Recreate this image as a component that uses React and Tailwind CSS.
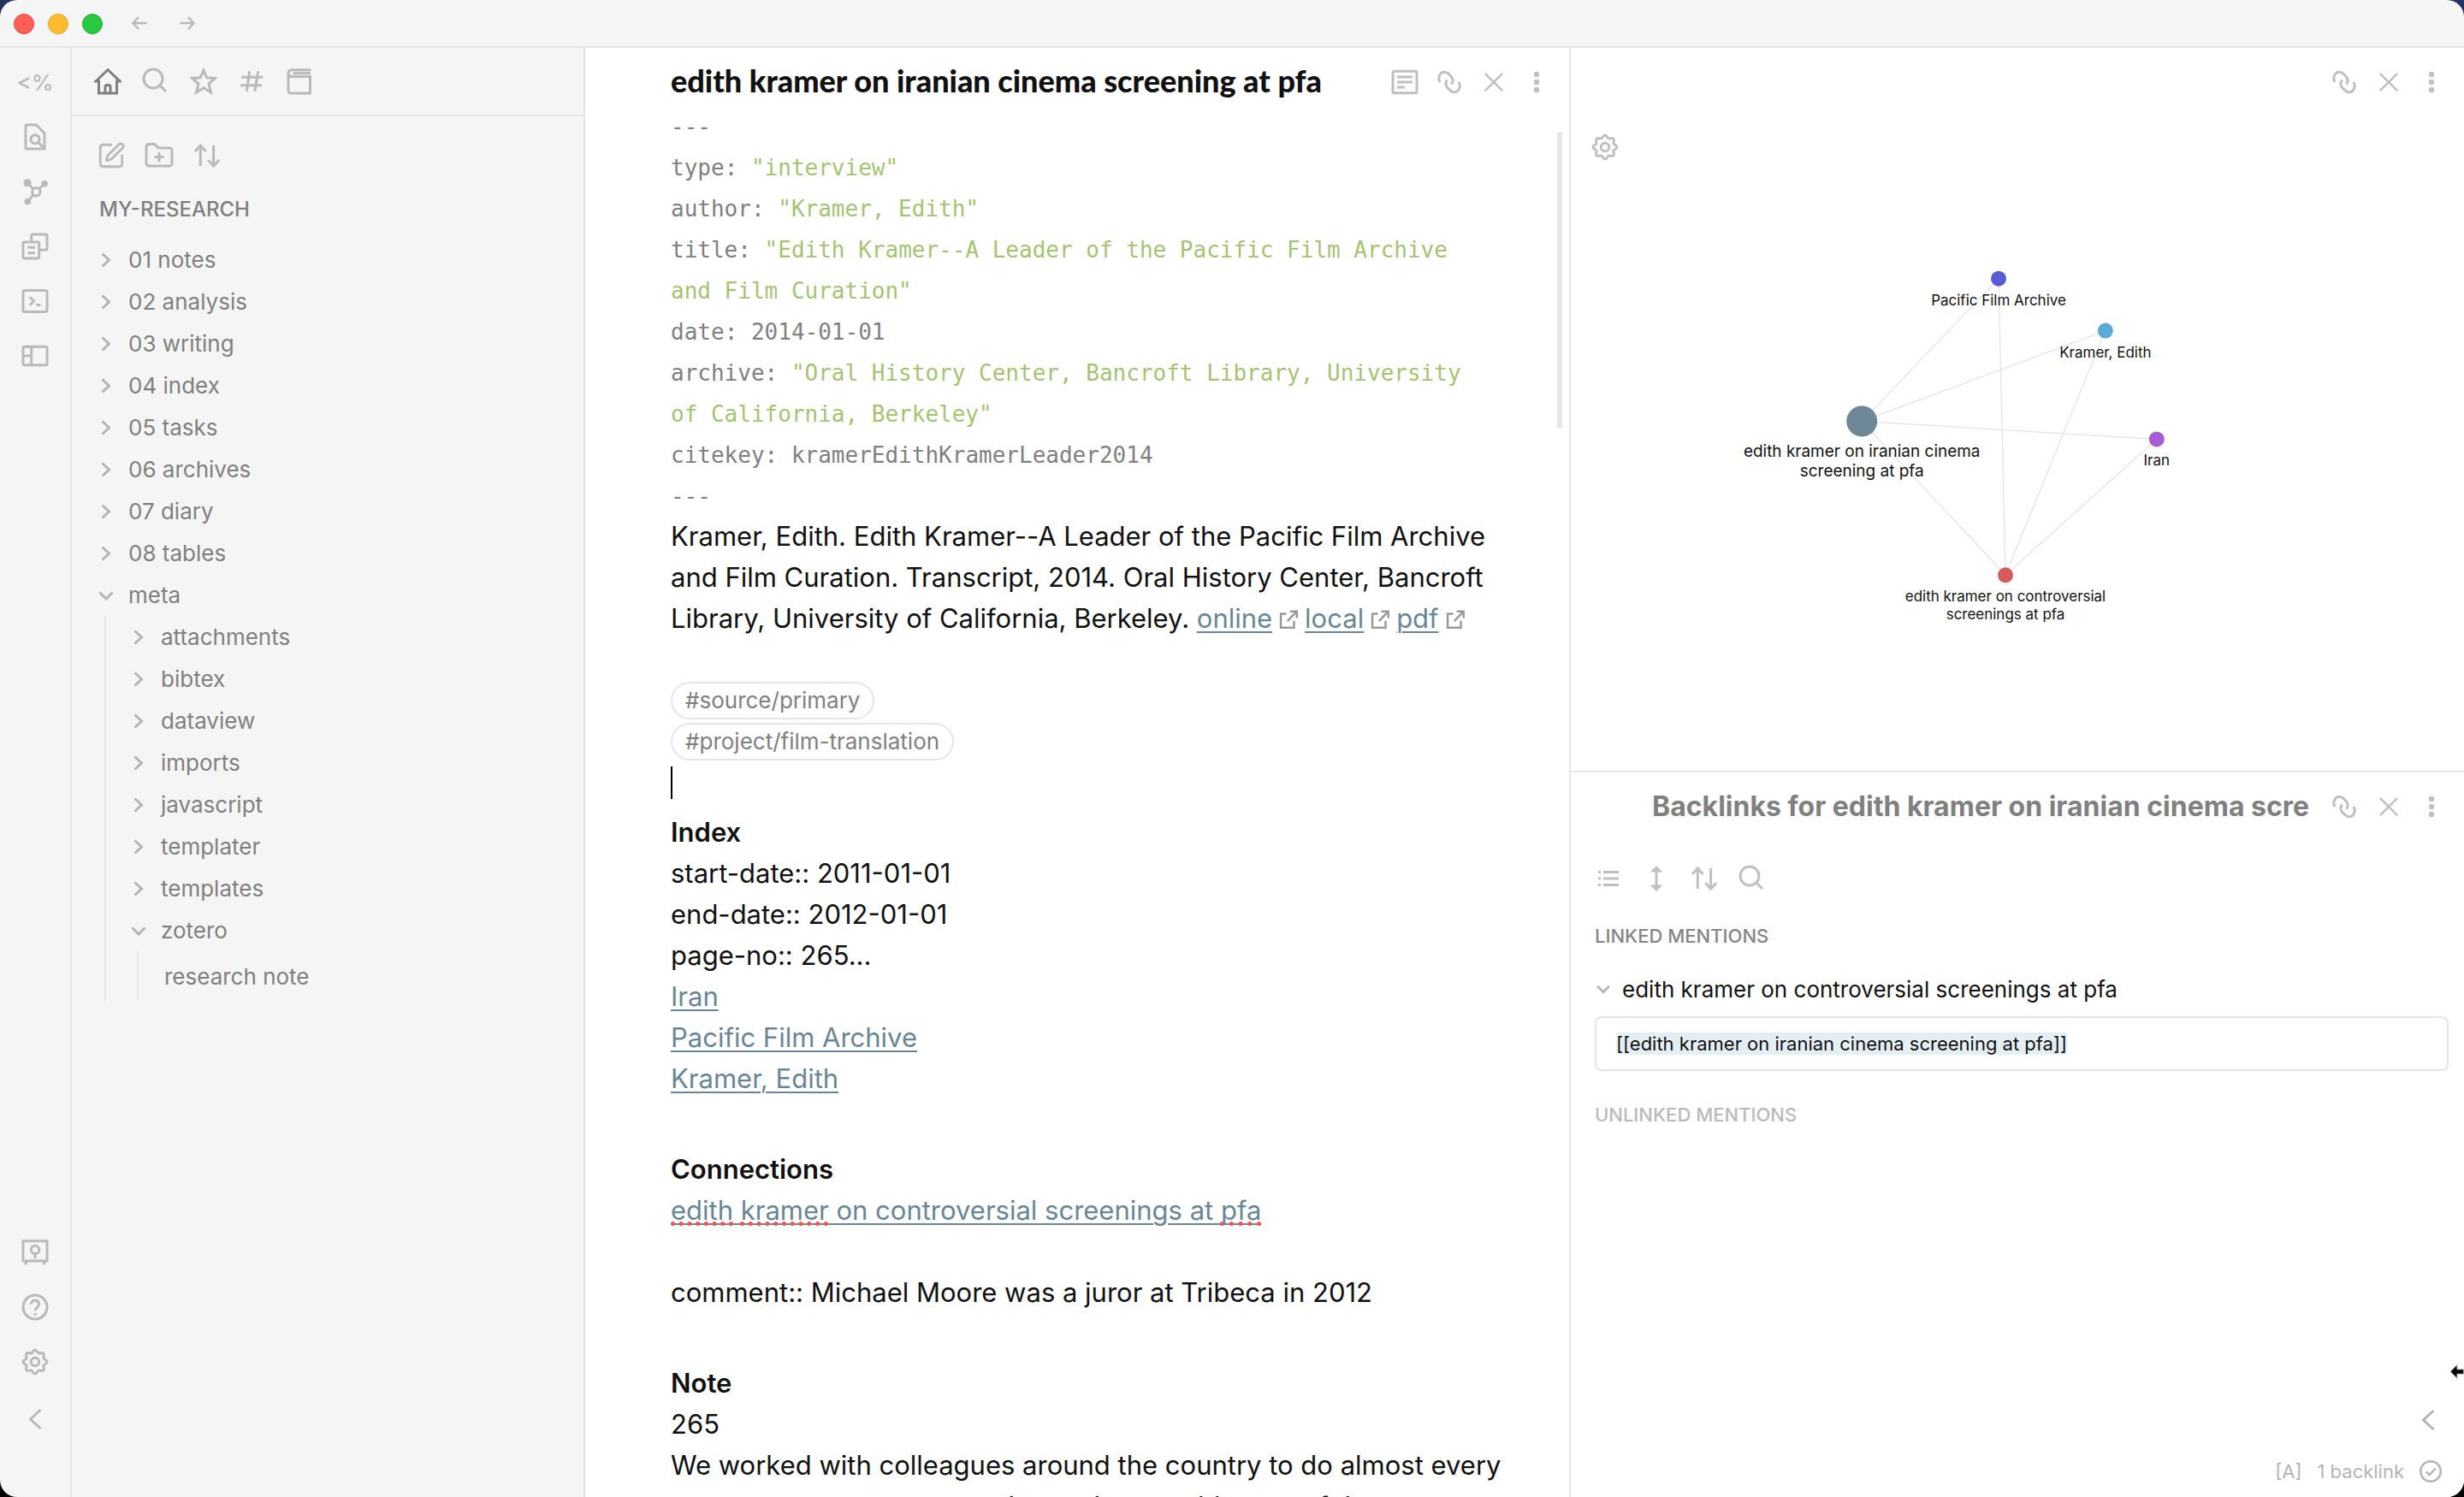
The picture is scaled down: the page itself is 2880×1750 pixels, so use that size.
import React from "react";
import { FolderPlus, SquarePen } from "lucide-react";

const gearPath =
  Array.from({ length: 96 }, (_, i) => {
    const t = (i / 96) * Math.PI * 2;
    const r = 12.4 + 1.5 * Math.cos(8 * t);
    return `${i ? "L" : "M"}${(16 + r * Math.sin(t)).toFixed(2)} ${(16 - r * Math.cos(t)).toFixed(2)}`;
  }).join("") + "Z";

const shapes = {
  home: (
    <>
      <path d="M2 16 16 2.5 30 16H26.5V30H5.5V16Z" />
      <path d="M13 30v-7.5a2 2 0 0 1 2-2h2a2 2 0 0 1 2 2V30" />
    </>
  ),
  search: (
    <>
      <circle cx="13" cy="13" r="11" />
      <path d="m21 21 7 7" />
    </>
  ),
  star: <path d="M16 3 19.8 11.8 29.5 12.4 22 18.8 24.5 29 16 23.8 7.5 29 10 18.8 2.5 12.4 12.2 11.8Z" />,
  hash: <path d="M13.7 4.3 10.3 27.7M23.7 4.3 19.9 27.7M4.3 11.3H29.3M3 20.7H28" />,
  book: (
    <>
      <path d="M29.5 2.7H7a4 4 0 0 0-4 4V27a3 3 0 0 0 3 3h22.5V10.5H7a4 4 0 0 1-4-4" />
      <path d="M8.5 6.7H29" />
    </>
  ),
  sort: <path d="M8.3 28V4M2 11 8.3 4l6.3 7M23.6 4v24M17.3 21.3l6.3 6.7 6.4-6.7" />,
  fileSearch: (
    <>
      <path d="M6.5 2H17.3L27 11.7V30H6.5A1.5 1.5 0 0 1 5 28.5V3.5A1.5 1.5 0 0 1 6.5 2Z" />
      <circle cx="16" cy="18.7" r="5" />
      <path d="m19.6 22.3 7.4 7.2" />
    </>
  ),
  graph: (
    <>
      <circle cx="17.3" cy="16.3" r="4.7" />
      <path d="M7 5.7 13.9 13M20.6 13 27 6.7M14 19.8 7.3 27.7" />
      <g fill="currentColor" stroke="none">
        <circle cx="7" cy="5.7" r="4.5" />
        <circle cx="27" cy="6.7" r="3.8" />
        <circle cx="7.3" cy="27.5" r="3.8" />
      </g>
    </>
  ),
  copy: (
    <>
      <path d="M11.7 11V3.5A1.5 1.5 0 0 1 13.2 2H28.5A1.5 1.5 0 0 1 30 3.5V18.8A1.5 1.5 0 0 1 28.5 20.3H21" />
      <rect x="2" y="11" width="18.7" height="19" rx="1.5" />
      <path d="M7.3 17.3H16M7.3 23.7H16" />
    </>
  ),
  terminal: (
    <>
      <rect x="2" y="3.5" width="28" height="25" rx="2" />
      <path d="m9.7 11.3 4.8 4.7-4.8 4.7M17.5 20.5h5" />
    </>
  ),
  layout: (
    <>
      <rect x="2" y="5.3" width="28" height="21.5" rx="1.5" />
      <path d="M11.7 5.3V26.8M2 16H11.7" />
    </>
  ),
  vault: (
    <>
      <path d="M2 2.7H30V26H2ZM5.3 26v4.5M26.7 26v4.5M16 17.7v5.5" />
      <circle cx="16" cy="13" r="4.7" />
    </>
  ),
  help: (
    <>
      <circle cx="16" cy="16" r="14" />
      <path d="M11.5 12.5a4.5 4.5 0 1 1 7.3 3.5C17 17.3 16 18 16 20.3M16 23v2.5" />
    </>
  ),
  gear: (
    <>
      <path d={gearPath} />
      <circle cx="16" cy="16" r="4.7" />
    </>
  ),
  back: <path d="M22.5 5 10.5 16 22.5 27" />,
  lines: (
    <>
      <rect x="2" y="3.3" width="28" height="25.4" rx="1.5" />
      <path d="M7 10H25M7 16H25M7 22H16" />
    </>
  ),
  link: (
    <>
      <path d="M5 16C2 11 5 4.2 10.5 4.2C13.5 4.2 15 6 18 9.2C21.2 13 20.5 16 18.5 18.5" />
      <path d="M27 16C30 21 27 27.8 21.5 27.8C18.5 27.8 17 26 14 22.8C10.8 19 11.5 16 13.5 13.5" />
    </>
  ),
  close: <path d="M5.8 5.8 26.2 26.2M26.2 5.8 5.8 26.2" strokeWidth="2.5" />,
  dots: (
    <g fill="currentColor" stroke="none">
      <circle cx="16" cy="7" r="3.2" />
      <circle cx="16" cy="16" r="3.2" />
      <circle cx="16" cy="25" r="3.2" />
    </g>
  ),
  list: <path d="M10 8.5H28M10 16H28M10 23.5H28M4 8.5H7M4 16H7M4 23.5H7" />,
  expand: (
    <>
      <path d="M16 6V26" />
      <path d="M16 1 23.2 8.5H8.8ZM16 31 23.2 23.5H8.8Z" fill="currentColor" stroke="none" />
    </>
  ),
  right: <path d="m11.5 8.5 8 7.5-8 7.5" />,
  down: <path d="m8.5 12.5 7.5 7.5 7.5-7.5" />,
  fold: <path d="m5 11 11 11 11-11" strokeWidth="4.5" />,
  arrowLeft: <path d="M24.5 16H8.5M15 9 8.5 16l6.5 7" strokeWidth="2.5" />,
  arrowRight: <path d="M7.5 16h16M17 9l6.5 7-6.5 7" strokeWidth="2.5" />,
  external: (
    <>
      <path d="M13 8H5V28H24V18" />
      <path d="M18 4.5H28V14M28 4.5 14.5 18.5" />
    </>
  ),
  check: (
    <>
      <circle cx="16" cy="16" r="14.5" />
      <path d="m9.5 16.5 4.5 4.5 9-9" />
    </>
  ),
};

function Icon({ name, className = "size-8" }) {
  return (
    <svg
      viewBox="0 0 32 32"
      fill="none"
      stroke="currentColor"
      strokeWidth="3"
      aria-hidden="true"
      className={`shrink-0 ${className}`}
    >
      {shapes[name]}
    </svg>
  );
}

function IconButton({ name, label, className = "h-8 w-[52px]" }) {
  return (
    <button type="button" aria-label={label} className={`flex shrink-0 items-center justify-center ${className}`}>
      <Icon name={name} />
    </button>
  );
}

function Ribbon() {
  return (
    <nav aria-label="Ribbon" className="flex w-[84px] shrink-0 flex-col items-center border-r-2 border-[#e6e6e6] pt-2 pb-14 text-[#bababa]">
      <button type="button" aria-label="Templater" className="flex h-16 w-full items-center justify-center text-[26px] font-medium">
        &lt;%
      </button>
      <IconButton name="fileSearch" label="Quick switcher" className="h-16 w-full" />
      <IconButton name="graph" label="Graph view" className="h-16 w-full" />
      <IconButton name="copy" label="Insert template" className="h-16 w-full" />
      <IconButton name="terminal" label="Command palette" className="h-16 w-full" />
      <IconButton name="layout" label="Workspace layouts" className="h-16 w-full" />
      <div className="grow" />
      <IconButton name="vault" label="Open vault" className="h-16 w-full" />
      <IconButton name="help" label="Help" className="h-16 w-full" />
      <IconButton name="gear" label="Settings" className="h-16 w-full" />
      <IconButton name="back" label="Collapse" className="h-[70px] w-full" />
    </nav>
  );
}

const tree = [
  { name: "01 notes" },
  { name: "02 analysis" },
  { name: "03 writing" },
  { name: "04 index" },
  { name: "05 tasks" },
  { name: "06 archives" },
  { name: "07 diary" },
  { name: "08 tables" },
  {
    name: "meta",
    children: [
      { name: "attachments" },
      { name: "bibtex" },
      { name: "dataview" },
      { name: "imports" },
      { name: "javascript" },
      { name: "templater" },
      { name: "templates" },
      { name: "zotero", children: [{ name: "research note", file: true }] },
    ],
  },
];

function TreeItem({ item }) {
  if (item.file) {
    return (
      <li>
        <button type="button" className="flex h-[58px] w-full items-center pl-[30px]">{item.name}</button>
      </li>
    );
  }
  return (
    <li>
      <button type="button" aria-expanded={Boolean(item.children)} className="flex h-[49px] w-full items-center gap-2.5 pl-[22px]">
        <span className="text-[#b4b4b4]">
          <Icon name={item.children ? "down" : "right"} />
        </span>
        {item.name}
      </button>
      {item.children && (
        <ul className="ml-9 border-l-2 border-[#e6e6e6]">
          {item.children.map((c) => (
            <TreeItem key={c.name} item={c} />
          ))}
        </ul>
      )}
    </li>
  );
}

function Sidebar() {
  return (
    <aside className="flex w-[600px] shrink-0 flex-col border-r-2 border-[#e6e6e6] text-[#808080]">
      <div className="flex h-20 shrink-0 items-center border-b-2 border-[#e6e6e6] pl-[14px] text-[#bababa]">
        <span className="text-[#808080]">
          <IconButton name="home" label="Files" className="h-8 w-14" />
        </span>
        <IconButton name="search" label="Search" className="h-8 w-14" />
        <IconButton name="star" label="Starred" className="h-8 w-14" />
        <IconButton name="hash" label="Tags" className="h-8 w-14" />
        <IconButton name="book" label="Notebook" className="h-8 w-14" />
      </div>
      <div className="flex pt-[30px] pl-[18px] text-[#bababa]">
        <button type="button" aria-label="New note" className="flex h-8 w-14 items-center justify-center">
          <SquarePen size={34} />
        </button>
        <button type="button" aria-label="New folder" className="flex h-8 w-14 items-center justify-center">
          <FolderPlus size={36} />
        </button>
        <IconButton name="sort" label="Change sort order" className="h-8 w-14" />
      </div>
      <h2 className="mt-[31px] mb-[18px] pl-8 text-2xl font-medium">MY-RESEARCH</h2>
      <ul className="pl-0.5 text-[26px]">
        {tree.map((item) => (
          <TreeItem key={item.name} item={item} />
        ))}
      </ul>
    </aside>
  );
}

const linkClass = "text-[#6a8695] underline decoration-2 underline-offset-4";

function ExternalLink({ children }) {
  return (
    <>
      <a href="#" className={linkClass}>{children}</a>
      <span className="mx-1.5 inline-block align-[-3px] text-[#999]">
        <Icon name="external" className="size-[26px]" />
      </span>
    </>
  );
}

function Field({ name, children, quoted }) {
  return (
    <div>
      {name}: <span className={quoted ? "text-[#a5c373]" : ""}>{children}</span>
    </div>
  );
}

function Heading({ children }) {
  return <h2 className="pt-2.5 font-semibold">{children}</h2>;
}

function Blank() {
  return <div className="h-12" />;
}

function Misspelt({ children }) {
  return <span className="underline decoration-[#f0564f] decoration-dotted decoration-[5px] underline-offset-2 [text-decoration-skip-ink:none]">{children}</span>;
}

function Tag({ children }) {
  return (
    <div className="flex h-12 items-center">
      <a href="#" className="flex h-11 items-center rounded-full border-2 border-[#e6e6e6] px-[15px] text-[26px] text-[#808080]">{children}</a>
    </div>
  );
}

function Editor() {
  return (
    <main className="relative flex min-w-0 flex-[1150] flex-col border-r-2 border-[#e6e6e6] bg-white">
      <header className="flex h-[68px] shrink-0 items-center pt-3 pr-[14px] pl-[100px]">
        <h1 className="min-w-0 grow truncate pb-1 font-['Lato',sans-serif] text-4xl leading-[48px] font-black">edith kramer on iranian cinema screening at pfa</h1>
        <div className="flex text-[#c0c0c0]">
          <IconButton name="lines" label="Preview" />
          <IconButton name="link" label="Linked pane" />
          <IconButton name="close" label="Close pane" />
          <IconButton name="dots" label="More options" className="h-8 w-12" />
        </div>
      </header>
      <article className="min-h-0 grow overflow-hidden pr-[72px] pl-[100px] text-[31px] leading-[48px]">
        <div className="-mb-px pr-8 font-['DejaVu_Sans_Mono',monospace] text-[26px] leading-[48px] text-[#808080]">
          <div>---</div>
          <Field name="type" quoted>"interview"</Field>
          <Field name="author" quoted>"Kramer, Edith"</Field>
          <Field name="title" quoted>"Edith Kramer--A Leader of the Pacific Film Archive and Film Curation"</Field>
          <Field name="date">2014-01-01</Field>
          <Field name="archive" quoted>"Oral History Center, Bancroft Library, University of California, Berkeley"</Field>
          <Field name="citekey">kramerEdithKramerLeader2014</Field>
          <div>---</div>
        </div>
        <p>
          Kramer, Edith. Edith Kramer--A Leader of the Pacific Film Archive and Film Curation. Transcript, 2014. Oral History Center, Bancroft Library, University of California, Berkeley.{" "}
          <ExternalLink>online</ExternalLink>
          <ExternalLink>local</ExternalLink>
          <ExternalLink>pdf</ExternalLink>
        </p>
        <Blank />
        <Tag>#source/primary</Tag>
        <Tag>#project/film-translation</Tag>
        <div className="flex h-12 items-center">
          <span className="h-[38px] w-0.5 bg-black" />
        </div>
        <Heading>Index</Heading>
        <p>start-date:: 2011-01-01</p>
        <p>end-date:: 2012-01-01</p>
        <p>page-no:: 265...</p>
        <p><a href="#" className={linkClass}>Iran</a></p>
        <p><a href="#" className={linkClass}>Pacific Film Archive</a></p>
        <p><a href="#" className={linkClass}>Kramer, Edith</a></p>
        <Blank />
        <Heading>Connections</Heading>
        <p>
          <a href="#" className={linkClass}>
            <Misspelt>edith</Misspelt> <Misspelt>kramer</Misspelt> on controversial screenings at <Misspelt>pfa</Misspelt>
          </a>
        </p>
        <Blank />
        <p>comment:: Michael Moore was a juror at Tribeca in 2012</p>
        <Blank />
        <Heading>Note</Heading>
        <p>265</p>
        <p>We worked with colleagues around the country to do almost every movement or museum touring series, would a any of the</p>
      </article>
      <div className="absolute top-[99px] right-2 h-[345px] w-1.5 bg-[#e6e6e6]" />
    </main>
  );
}

const nodes = {
  pfa: { x: 500, y: 270, r: 9, fill: "#5b5bd6", size: 17, lines: ["Pacific Film Archive"] },
  kramer: { x: 625, y: 331, r: 9, fill: "#5aa9d6", size: 17, lines: ["Kramer, Edith"] },
  current: { x: 340, y: 437, r: 18, fill: "#6d8796", size: 19, lines: ["edith kramer on iranian cinema", "screening at pfa"] },
  iran: { x: 685, y: 458, r: 9, fill: "#aa5bd6", size: 17, lines: ["Iran"] },
  screenings: { x: 508, y: 617, r: 9, fill: "#d65b5b", size: 17, lines: ["edith kramer on controversial", "screenings at pfa"] },
};

const edges = [
  ["current", "pfa"],
  ["current", "kramer"],
  ["current", "iran"],
  ["current", "screenings"],
  ["pfa", "screenings"],
  ["kramer", "screenings"],
  ["iran", "screenings"],
];

function Graph() {
  return (
    <svg viewBox="0 0 1044 846" role="img" aria-label="Local graph" className="absolute inset-0 size-full">
      {edges.map(([a, b]) => (
        <line key={a + b} x1={nodes[a].x} y1={nodes[a].y} x2={nodes[b].x} y2={nodes[b].y} stroke="#e6e6e6" strokeWidth="1.4" />
      ))}
      {Object.entries(nodes).map(([id, n]) => (
        <g key={id}>
          <circle cx={n.x} cy={n.y} r={n.r} fill={n.fill} />
          {n.lines.map((t, i) => (
            <text key={t} x={n.x} y={n.y + n.r + n.size + 5 + i * (n.size + 4)} textAnchor="middle" fontSize={n.size} fill="#111">
              {t}
            </text>
          ))}
        </g>
      ))}
    </svg>
  );
}

function PaneActions() {
  return (
    <div className="flex shrink-0 text-[#c0c0c0]">
      <IconButton name="link" label="Linked pane" />
      <IconButton name="close" label="Close pane" />
      <IconButton name="dots" label="More options" className="h-8 w-12" />
    </div>
  );
}

function RightPanes() {
  return (
    <div className="relative flex min-w-0 flex-[1044] flex-col bg-white">
      <section aria-label="Graph" className="relative min-h-0 flex-[846] border-b-2 border-[#e6e6e6]">
        <Graph />
        <div className="relative">
          <header className="flex h-20 items-center justify-end pr-[14px]">
            <PaneActions />
          </header>
          <div className="pt-5 pl-6 text-[#c0c0c0]">
            <IconButton name="gear" label="Graph settings" className="size-8" />
          </div>
        </div>
      </section>
      <section aria-label="Backlinks" className="flex min-h-0 flex-[848] flex-col">
        <header className="flex h-20 shrink-0 items-center pr-[14px] pl-[95px]">
          <h2 className="mr-4 min-w-0 grow overflow-hidden text-[32px] leading-10 font-bold whitespace-nowrap text-[#808080]">
            Backlinks for edith kramer on iranian cinema screening at pfa
          </h2>
          <PaneActions />
        </header>
        <div className="flex pt-7 pl-4 text-[#c0c0c0]">
          <IconButton name="list" label="Collapse results" className="h-8 w-14" />
          <IconButton name="expand" label="Show more context" className="h-8 w-14" />
          <IconButton name="sort" label="Change sort order" className="h-8 w-14" />
          <IconButton name="search" label="Show search filter" className="h-8 w-14" />
        </div>
        <div className="pt-[35px] pr-[18px] pl-7">
          <h3 className="text-[22px] leading-8 font-medium text-[#858585]">LINKED MENTIONS</h3>
          <button type="button" className="mt-[22px] flex h-12 items-center gap-3 text-[26px] text-[#111]">
            <span className="text-[#b4b4b4]">
              <Icon name="fold" className="size-5" />
            </span>
            edith kramer on controversial screenings at pfa
          </button>
          <div className="mt-2 flex h-16 items-center rounded-lg border-2 border-[#e6e6e6] px-[23px] text-[22px]">
            <mark className="bg-[#e4eff5] leading-[26px] text-[#111]">[[edith kramer on iranian cinema screening at pfa]]</mark>
          </div>
          <h3 className="mt-[35px] text-[22px] leading-8 font-medium text-[#bababa]">UNLINKED MENTIONS</h3>
        </div>
        <div className="grow" />
        <div className="flex justify-end pr-[15px] text-[#b4b4b4]">
          <IconButton name="back" label="Expand right sidebar" className="h-11 w-[54px]" />
        </div>
        <footer className="flex h-[68px] shrink-0 items-center justify-end gap-[18px] pt-2 pr-[26px] text-[22px] text-[#b4b4b4]">
          <span>[A]</span>
          <span>1 backlink</span>
          <Icon name="check" className="size-[26px]" />
        </footer>
      </section>
      <svg viewBox="0 0 16 20" aria-hidden="true" className="absolute right-0 bottom-[135px] h-[22px] w-[18px]">
        <path d="M1.5 9.5 9 2V7H16V12H9V17Z" fill="#000" stroke="#ccc" strokeWidth="1" />
      </svg>
    </div>
  );
}

export default function App() {
  return (
    <div className="h-screen bg-linear-to-b from-[#22355f] to-black font-['Inter',sans-serif] text-[#111]">
      <div className="flex h-full flex-col overflow-hidden rounded-[20px] bg-[#f5f5f5]">
        <div className="flex h-14 shrink-0 items-center border-b-2 border-[#e6e6e6] pl-4">
          <div className="flex gap-4 pt-0.5">
            <button type="button" aria-label="Close" className="size-6 rounded-full border border-[#e2463f] bg-[#ff5f57]" />
            <button type="button" aria-label="Minimise" className="size-6 rounded-full border border-[#e1a325] bg-[#febc2e]" />
            <button type="button" aria-label="Zoom" className="size-6 rounded-full border border-[#1fad2f] bg-[#28c840]" />
          </div>
          <div className="flex pl-[15px] text-[#bababa]">
            <IconButton name="arrowLeft" label="Back" className="h-8 w-14" />
            <IconButton name="arrowRight" label="Forward" className="h-8 w-14" />
          </div>
        </div>
        <div className="flex min-h-0 grow">
          <Ribbon />
          <Sidebar />
          <Editor />
          <RightPanes />
        </div>
      </div>
    </div>
  );
}
